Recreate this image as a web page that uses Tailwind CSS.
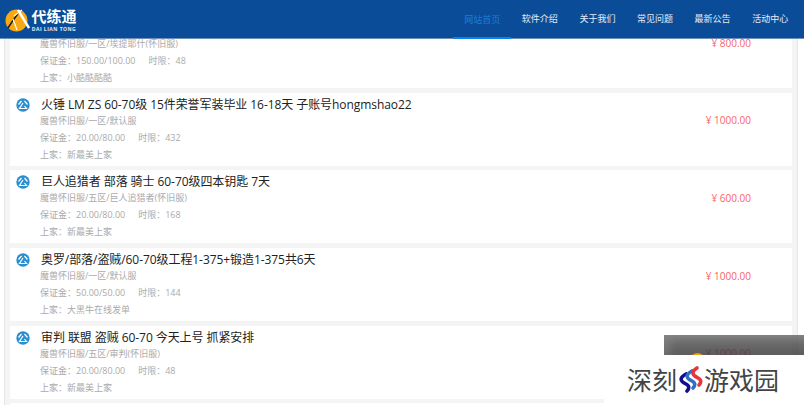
<!DOCTYPE html>
<html lang="en">
<head>
<meta charset="UTF-8">
<title>代练通</title>
<script src="https://cdn.jsdelivr.net/npm/@tailwindcss/browser@4"></script>
</head>
<body class="relative h-[405px] w-[804px] overflow-hidden bg-white font-['Open_Sans','Noto_Sans_CJK_SC',sans-serif]">

  <!-- header -->
  <header class="absolute left-0 right-0 top-0 z-10 flex h-[39px] items-center justify-between border-b border-[#6f8fbb] bg-[#0a4c98]">
    <div class="ml-[5px] flex items-center gap-[1px] pt-[2px]">
      <svg width="25" height="26" viewBox="0 0 25 26">
        <circle cx="11.5" cy="13.5" r="11" fill="#f7a90f"/>
        <path d="M3 21 C6 16 9 12 14 5" stroke="#1b1b1b" stroke-width="1.5" fill="none"/>
        <path d="M13 3 L24 21" stroke="#fff" stroke-width="2.4" fill="none"/>
        <path d="M8 12 L12 23 M9 9 L17 3" stroke="#fff" stroke-width="1.2" fill="none"/>
      </svg>
      <div class="flex w-[46px] flex-col items-center">
        <span class="text-[15px] font-bold leading-[18px] text-white">代练通</span>
        <span class="whitespace-nowrap text-[5px] font-bold leading-[8px] tracking-[0.5px] text-white/90">DAI LIAN TONG</span>
      </div>
    </div>
    <nav class="mr-[5px] flex h-full text-[9px] text-white/90">
      <a class="flex h-[39px] w-[57.6px] items-center justify-center border-b-2 border-[#0a82e6] pt-[2px] text-[#1c7fd8]">网站首页</a>
      <a class="flex w-[57.6px] items-center justify-center">软件介绍</a>
      <a class="flex w-[57.6px] items-center justify-center">关于我们</a>
      <a class="flex w-[57.6px] items-center justify-center">常见问题</a>
      <a class="flex w-[57.6px] items-center justify-center">最新公告</a>
      <a class="flex w-[57.6px] items-center justify-center">活动中心</a>
    </nav>
  </header>

  <!-- list -->
  <div class="ml-[4px] mr-[6px] h-[405px] border-x border-[#e6e6e6] bg-[#f4f4f4] px-[5px]">
    <main class="flex flex-col gap-[4.7px] pt-[15px]">

      <div class="flex h-[73px] items-stretch bg-white">
        <div class="w-[30px]"></div>
        <div class="flex-1 pt-[19.5px] text-[9px] leading-[17px] text-[#aaa]">
          <p>魔兽怀旧服/一区/埃提耶什(怀旧服)</p>
          <p>保证金：150.00/100.00<span class="ml-[13px]">时限：48</span></p>
          <p>上家：小酷酷酷酷</p>
        </div>
        <div class="w-[140px] pr-[41px] pt-[19.5px] text-right text-[10px] leading-[17px] text-[#f76464]">¥ 800.00</div>
      </div>

      <div class="flex h-[73px] items-stretch bg-white">
        <div class="w-[30px] pl-[6px] pt-[5px]">
          <svg width="14" height="14" viewBox="0 0 14 14">
            <circle cx="7" cy="7" r="6.7" fill="#2a8fd0"/>
            <path d="M5.5 3 L2.5 6.5 M8.5 3 L11.5 6.5 M7 5 L3.5 10.5 H10.5 L8.5 8" stroke="#fff" stroke-width="1.2" fill="none"/>
          </svg>
        </div>
        <div class="flex-1 pt-[3px]">
          <p class="pl-[1px] text-[12px] leading-[18px] tracking-[-0.07px] text-[#222]">火锤 LM ZS 60-70级 15件荣誉军装毕业 16-18天 子账号hongmshao22</p>
          <div class="-mt-[2px] text-[9px] leading-[17px] text-[#aaa]">
            <p>魔兽怀旧服/一区/默认服</p>
            <p>保证金：20.00/80.00<span class="ml-[13px]">时限：432</span></p>
            <p>上家：新最美上家</p>
          </div>
        </div>
        <div class="w-[140px] pr-[41px] pt-[19.5px] text-right text-[10px] leading-[17px] text-[#f76464]">¥ 1000.00</div>
      </div>

      <div class="flex h-[73px] items-stretch bg-white">
        <div class="w-[30px] pl-[6px] pt-[5px]">
          <svg width="14" height="14" viewBox="0 0 14 14">
            <circle cx="7" cy="7" r="6.7" fill="#2a8fd0"/>
            <path d="M5.5 3 L2.5 6.5 M8.5 3 L11.5 6.5 M7 5 L3.5 10.5 H10.5 L8.5 8" stroke="#fff" stroke-width="1.2" fill="none"/>
          </svg>
        </div>
        <div class="flex-1 pt-[3px]">
          <p class="pl-[1px] text-[12px] leading-[18px] tracking-[-0.07px] text-[#222]">巨人追猎者 部落 骑士 60-70级四本钥匙 7天</p>
          <div class="-mt-[2px] text-[9px] leading-[17px] text-[#aaa]">
            <p>魔兽怀旧服/五区/巨人追猎者(怀旧服)</p>
            <p>保证金：20.00/80.00<span class="ml-[13px]">时限：168</span></p>
            <p>上家：新最美上家</p>
          </div>
        </div>
        <div class="w-[140px] pr-[41px] pt-[19.5px] text-right text-[10px] leading-[17px] text-[#f76464]">¥ 600.00</div>
      </div>

      <div class="flex h-[73px] items-stretch bg-white">
        <div class="w-[30px] pl-[6px] pt-[5px]">
          <svg width="14" height="14" viewBox="0 0 14 14">
            <circle cx="7" cy="7" r="6.7" fill="#2a8fd0"/>
            <path d="M5.5 3 L2.5 6.5 M8.5 3 L11.5 6.5 M7 5 L3.5 10.5 H10.5 L8.5 8" stroke="#fff" stroke-width="1.2" fill="none"/>
          </svg>
        </div>
        <div class="flex-1 pt-[3px]">
          <p class="pl-[1px] text-[12px] leading-[18px] tracking-[-0.07px] text-[#222]">奥罗/部落/盗贼/60-70级工程1-375+锻造1-375共6天</p>
          <div class="-mt-[2px] text-[9px] leading-[17px] text-[#aaa]">
            <p>魔兽怀旧服/一区/默认服</p>
            <p>保证金：50.00/50.00<span class="ml-[13px]">时限：144</span></p>
            <p>上家：大黑牛在线发单</p>
          </div>
        </div>
        <div class="w-[140px] pr-[41px] pt-[19.5px] text-right text-[10px] leading-[17px] text-[#f76464]">¥ 1000.00</div>
      </div>

      <div class="flex h-[73px] items-stretch bg-white">
        <div class="w-[30px] pl-[6px] pt-[5px]">
          <svg width="14" height="14" viewBox="0 0 14 14">
            <circle cx="7" cy="7" r="6.7" fill="#2a8fd0"/>
            <path d="M5.5 3 L2.5 6.5 M8.5 3 L11.5 6.5 M7 5 L3.5 10.5 H10.5 L8.5 8" stroke="#fff" stroke-width="1.2" fill="none"/>
          </svg>
        </div>
        <div class="flex-1 pt-[3px]">
          <p class="pl-[1px] text-[12px] leading-[18px] tracking-[-0.07px] text-[#222]">审判 联盟 盗贼 60-70 今天上号 抓紧安排</p>
          <div class="-mt-[2px] text-[9px] leading-[17px] text-[#aaa]">
            <p>魔兽怀旧服/五区/审判(怀旧服)</p>
            <p>保证金：20.00/80.00<span class="ml-[13px]">时限：48</span></p>
            <p>上家：新最美上家</p>
          </div>
        </div>
        <div class="w-[140px] pr-[41px] pt-[19.5px] text-right text-[10px] leading-[17px] text-[#f76464]">¥ 1000.00</div>
      </div>

      <div class="h-[2px] bg-white"></div>
    </main>
  </div>

  <!-- watermark over the corner -->
  <div class="absolute bottom-[50px] right-0 z-20 h-[20px] w-[140px] overflow-hidden bg-gradient-to-b from-[#666]/90 to-[#333]/80 shadow-[inset_6px_4px_8px_rgba(255,255,255,0.12)]">
    <div class="ml-[26px] mt-[18px] h-[15px] w-[15px] rounded-full bg-[#f0a010]"></div>
  </div>
  <div class="absolute bottom-0 right-0 z-20 flex h-[50px] w-[200px] items-center bg-white pb-[3px] pl-[23px] font-['Noto_Sans_CJK_SC',sans-serif] text-[25px] leading-[30px] text-[#444]">
    <span>深刻</span>
    <svg class="ml-[1px]" width="26" height="28" viewBox="0 0 26 28" fill="none" stroke-width="3.6" stroke-linecap="round">
      <path d="M8 9 C1 13 2 16 8 19 C12 21 11 24 9 26" stroke="#10108a"/>
      <path d="M14 6 C7 10 8 13 14 16 C18 18 17 21 15 23" stroke="#2f6fc4"/>
      <path d="M19 3 C13 7 14 10 20 13 C24 15 23 18 21 20" stroke="#e8343a"/>
    </svg>
    <span>游戏园</span>
  </div>
</body>
</html>
